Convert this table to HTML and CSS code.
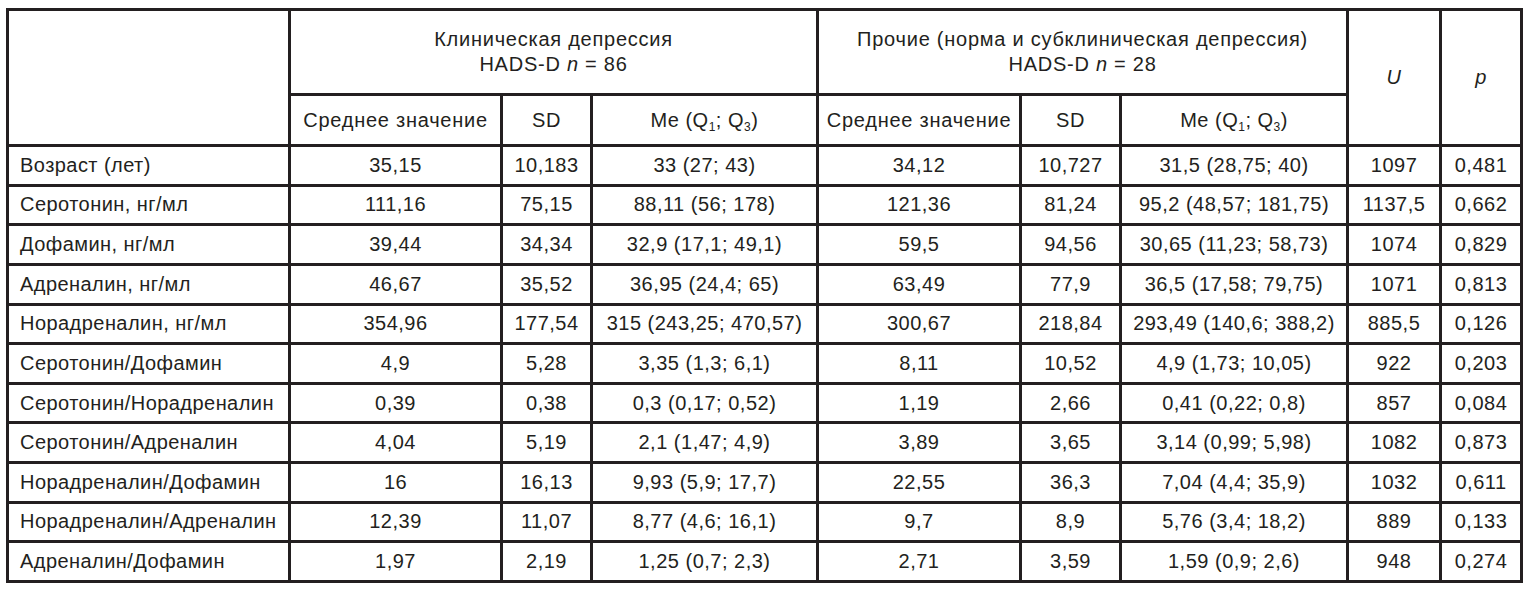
FILE: index.html
```html
<!DOCTYPE html>
<html lang="ru">
<head>
<meta charset="utf-8">
<title>Таблица</title>
<link rel="stylesheet" href="styles.css">
</head>
<body>
<table class="data">
  <colgroup>
    <col class="c-name">
    <col class="c-mean">
    <col class="c-sd">
    <col class="c-me">
    <col class="c-mean2">
    <col class="c-sd2">
    <col class="c-me2">
    <col class="c-u">
    <col class="c-p">
  </colgroup>
  <thead>
    <tr class="h1">
      <th rowspan="2"></th>
      <th colspan="3" class="wide">Клиническая депрессия<br>HADS-D <i>n</i> = 86</th>
      <th colspan="3" class="wide">Прочие (норма и субклиническая депрессия)<br>HADS-D <i>n</i> = 28</th>
      <th rowspan="2" class="it">U</th>
      <th rowspan="2" class="it">p</th>
    </tr>
    <tr class="h2">
      <th class="wide">Среднее значение</th>
      <th>SD</th>
      <th>Me (Q<sub>1</sub>; Q<sub>3</sub>)</th>
      <th class="wide">Среднее значение</th>
      <th>SD</th>
      <th>Me (Q<sub>1</sub>; Q<sub>3</sub>)</th>
    </tr>
  </thead>
  <tbody>
    <tr><td>Возраст (лет)</td><td>35,15</td><td>10,183</td><td>33 (27; 43)</td><td>34,12</td><td>10,727</td><td>31,5 (28,75; 40)</td><td>1097</td><td>0,481</td></tr>
    <tr><td>Серотонин, нг/мл</td><td>111,16</td><td>75,15</td><td>88,11 (56; 178)</td><td>121,36</td><td>81,24</td><td>95,2 (48,57; 181,75)</td><td>1137,5</td><td>0,662</td></tr>
    <tr><td>Дофамин, нг/мл</td><td>39,44</td><td>34,34</td><td>32,9 (17,1; 49,1)</td><td>59,5</td><td>94,56</td><td>30,65 (11,23; 58,73)</td><td>1074</td><td>0,829</td></tr>
    <tr><td>Адреналин, нг/мл</td><td>46,67</td><td>35,52</td><td>36,95 (24,4; 65)</td><td>63,49</td><td>77,9</td><td>36,5 (17,58; 79,75)</td><td>1071</td><td>0,813</td></tr>
    <tr><td>Норадреналин, нг/мл</td><td>354,96</td><td>177,54</td><td>315 (243,25; 470,57)</td><td>300,67</td><td>218,84</td><td>293,49 (140,6; 388,2)</td><td>885,5</td><td>0,126</td></tr>
    <tr><td>Серотонин/Дофамин</td><td>4,9</td><td>5,28</td><td>3,35 (1,3; 6,1)</td><td>8,11</td><td>10,52</td><td>4,9 (1,73; 10,05)</td><td>922</td><td>0,203</td></tr>
    <tr><td>Серотонин/Норадреналин</td><td>0,39</td><td>0,38</td><td>0,3 (0,17; 0,52)</td><td>1,19</td><td>2,66</td><td>0,41 (0,22; 0,8)</td><td>857</td><td>0,084</td></tr>
    <tr><td>Серотонин/Адреналин</td><td>4,04</td><td>5,19</td><td>2,1 (1,47; 4,9)</td><td>3,89</td><td>3,65</td><td>3,14 (0,99; 5,98)</td><td>1082</td><td>0,873</td></tr>
    <tr><td>Норадреналин/Дофамин</td><td>16</td><td>16,13</td><td>9,93 (5,9; 17,7)</td><td>22,55</td><td>36,3</td><td>7,04 (4,4; 35,9)</td><td>1032</td><td>0,611</td></tr>
    <tr><td>Норадреналин/Адреналин</td><td>12,39</td><td>11,07</td><td>8,77 (4,6; 16,1)</td><td>9,7</td><td>8,9</td><td>5,76 (3,4; 18,2)</td><td>889</td><td>0,133</td></tr>
    <tr><td>Адреналин/Дофамин</td><td>1,97</td><td>2,19</td><td>1,25 (0,7; 2,3)</td><td>2,71</td><td>3,59</td><td>1,59 (0,9; 2,6)</td><td>948</td><td>0,274</td></tr>
  </tbody>
</table>
</body>
</html>
```
FILE: styles.css
```css
html, body {
  margin: 0;
  background: #ffffff;
}
body {
  padding: 8px 0 0 6px;
  font-family: "Liberation Sans", Arial, sans-serif;
  font-size: 20px;
  letter-spacing: 0.5px;
  color: #231f20;
}
.data {
  border-collapse: separate;
  border-spacing: 0;
  table-layout: fixed;
  width: 1517px;
  border-left: 3px solid #231f20;
  border-top: 3px solid #231f20;
}
.data th,
.data td {
  box-sizing: border-box;
  border-right: 3px solid #231f20;
  border-bottom: 3px solid #231f20;
  padding: 0 2px;
  text-align: center;
  vertical-align: middle;
  font-weight: normal;
  white-space: nowrap;
  line-height: 25px;
}
.data td:first-child {
  text-align: left;
  padding-left: 11px;
  letter-spacing: 0.45px;
}
.data th.wide {
  letter-spacing: 0.75px;
}
.c-name { width: 282px; }
.c-mean { width: 212px; }
.c-sd { width: 90px; }
.c-me { width: 226px; }
.c-mean2 { width: 203px; }
.c-sd2 { width: 100px; }
.c-me2 { width: 227px; }
.c-u { width: 93px; }
.c-p { width: 81px; }
.h1 { height: 85px; }
.h2 { height: 51px; }
.data tbody tr { height: 39.64px; }
.it { font-style: italic; }
.data sub {
  font-size: 12px;
  vertical-align: -4px;
  line-height: 0;
}
```
